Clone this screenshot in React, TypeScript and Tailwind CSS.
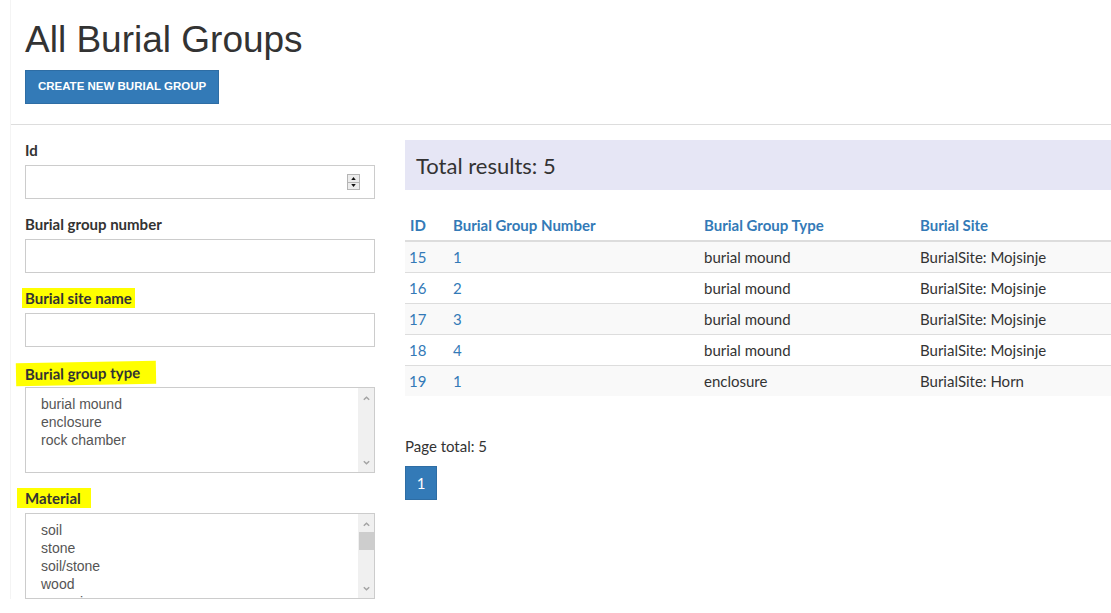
import React from "react";

type Row = { id: number; number: number; type: string; site: string };

const rows: Row[] = [
  { id: 15, number: 1, type: "burial mound", site: "BurialSite: Mojsinje" },
  { id: 16, number: 2, type: "burial mound", site: "BurialSite: Mojsinje" },
  { id: 17, number: 3, type: "burial mound", site: "BurialSite: Mojsinje" },
  { id: 18, number: 4, type: "burial mound", site: "BurialSite: Mojsinje" },
  { id: 19, number: 1, type: "enclosure", site: "BurialSite: Horn" },
];

const lato = { fontFamily: "Lato, 'Noto Sans', sans-serif" };
const arial = { fontFamily: "'Liberation Sans', Arial, sans-serif" };

// fake multi-select list with a windows-style scrollbar
const ListBox: React.FC<{ items: string[]; thumb?: boolean }> = ({ items, thumb }) => (
  <div className="flex h-[86px] w-[350px] border border-[#cccccc] bg-white">
    <div className="flex-1 overflow-hidden pl-[15px] pt-[7px] text-[14px] leading-[18px] text-[#555]" style={arial}>
      {items.map((it) => (
        <div key={it}>{it}</div>
      ))}
    </div>
    <div className="flex w-[16px] flex-col items-center bg-[#f0f0f0]">
      <svg viewBox="0 0 10 10" className="mt-[6px] h-[9px] w-[9px]" fill="none" stroke="#a3a3a3" strokeWidth={1.6}>
        <path d="M2 6.5 5 3.5 8 6.5" />
      </svg>
      {thumb ? <div className="mt-[3px] h-[18px] w-[15px] bg-[#cdcdcd]" /> : null}
      <div className="flex-1" />
      <svg viewBox="0 0 10 10" className="mb-[5px] h-[9px] w-[9px]" fill="none" stroke="#a3a3a3" strokeWidth={1.6}>
        <path d="M2 3.5 5 6.5 8 3.5" />
      </svg>
    </div>
  </div>
);

export default function App() {
  return (
    <div className="min-h-screen bg-white pl-[10px] text-[#333]">
      <div className="border-l border-[#f4f4f4]">
        {/* Header */}
        <div className="pl-[14px] pt-[20px]">
          <h1 className="text-[37px] font-normal leading-[40px] text-[#333]" style={arial}>
            All Burial Groups
          </h1>
          <button
            className="mt-[10px] h-[34px] w-[194px] border border-[#2e6da4] bg-[#337ab7] text-[11.5px] font-bold uppercase text-white"
            style={arial}
          >
            Create new burial group
          </button>
        </div>
        <div className="mt-[20px] h-px bg-[#dddddd]" />

        {/* Body */}
        <div className="flex gap-[30px] pl-[14px]">
          {/* Filters */}
          <div className="w-[350px] pt-[15px]" style={lato}>
            <div className="mb-[5px] h-[20px] text-[15px] font-bold leading-[20px]">Id</div>
            <div className="mb-[15px] flex h-[34px] items-center justify-end border border-[#cccccc] pr-[14px]">
              <div className="flex h-[16px] w-[13px] flex-col border border-[#b5b5b5] bg-[#ececec]">
                <div className="flex flex-1 items-center justify-center border-b border-[#b5b5b5]">
                  <svg viewBox="0 0 6 4" className="h-[3px] w-[5px]"><path d="M0 4 3 0 6 4Z" fill="#111" /></svg>
                </div>
                <div className="flex flex-1 items-center justify-center">
                  <svg viewBox="0 0 6 4" className="h-[3px] w-[5px]"><path d="M0 0 3 4 6 0Z" fill="#111" /></svg>
                </div>
              </div>
            </div>

            <div className="mb-[5px] h-[20px] text-[15px] font-bold leading-[20px]">Burial group number</div>
            <div className="mb-[15px] h-[34px] border border-[#cccccc]" />

            <div className="mb-[5px] h-[20px] text-[15px] font-bold leading-[20px]">
              <span className="-ml-[3px] bg-[#ffff00] px-[3px] py-[1px]">Burial site name</span>
            </div>
            <div className="mb-[15px] h-[34px] border border-[#cccccc]" />

            <div className="mb-[5px] h-[20px] text-[15px] font-bold leading-[20px]">
              <span className="-ml-[9px] inline-block -rotate-1 bg-[#ffff00] pl-[9px] pr-[16px] pt-[1px] pb-[2px]">
                Burial group type
              </span>
            </div>
            <div className="mb-[15px]">
              <ListBox items={["burial mound", "enclosure", "rock chamber"]} />
            </div>

            <div className="mb-[5px] h-[20px] text-[15px] font-bold leading-[20px]">
              <span className="-ml-[8px] bg-[#ffff00] pl-[8px] pr-[10px] py-[1px]">Material</span>
            </div>
            <ListBox items={["soil", "stone", "soil/stone", "wood", "ceramic"]} thumb />
          </div>

          {/* Results */}
          <div className="flex-1 pt-[15px]" style={lato}>
            <div className="flex h-[50px] items-center bg-[#e6e6f5] pl-[11px] text-[22px] text-[#333]">
              Total results: 5
            </div>

            <table className="mt-[17px] w-full border-collapse text-[15px]">
              <thead>
                <tr className="h-[34px] border-b-2 border-[#dddddd] text-left font-bold text-[#337ab7]">
                  <th className="w-[43px] pl-[5px] pb-[4px] align-bottom">ID</th>
                  <th className="w-[251px] pl-[5px] pb-[4px] align-bottom">Burial Group Number</th>
                  <th className="w-[216px] pl-[5px] pb-[4px] align-bottom">Burial Group Type</th>
                  <th className="pl-[5px] pb-[4px] align-bottom">Burial Site</th>
                </tr>
              </thead>
              <tbody>
                {rows.map((r, i) => (
                  <tr
                    key={r.id}
                    className={`h-[31px] ${i > 0 ? "border-t border-[#dddddd]" : ""} ${i % 2 === 0 ? "bg-[#f9f9f9]" : "bg-white"}`}
                  >
                    <td className="pl-[4px] pt-[1px] text-[#337ab7]">{r.id}</td>
                    <td className="pl-[5px] pt-[1px] text-[#337ab7]">{r.number}</td>
                    <td className="pl-[5px] pt-[1px]">{r.type}</td>
                    <td className="pl-[5px] pt-[1px]">{r.site}</td>
                  </tr>
                ))}
              </tbody>
            </table>

            <div className="mt-[40px] text-[15px] leading-[20px]">Page total: 5</div>
            <button className="mt-[10px] flex h-[34px] w-[32px] items-center justify-center border border-[#2e6da4] bg-[#337ab7] text-[15px] text-white">
              1
            </button>
          </div>
        </div>
      </div>
    </div>
  );
}
